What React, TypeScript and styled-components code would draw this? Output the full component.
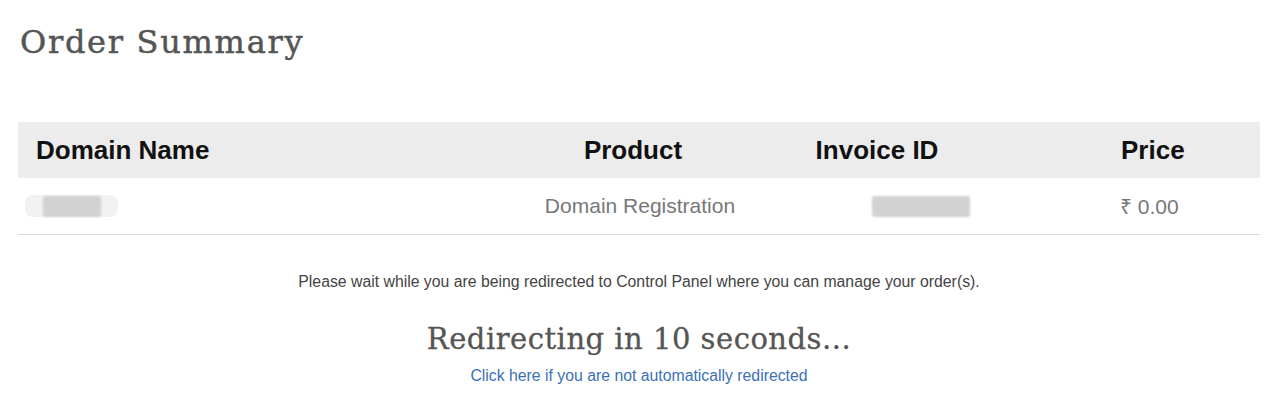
import React from "react";
import styled, { createGlobalStyle } from "styled-components";

const GlobalStyle = createGlobalStyle`
    body {
        margin: 0;
        background: #fff;
        font-family: "Liberation Sans", Arial, sans-serif;
    }
`;

const Page = styled.div`
    padding: 22px 20px 0 18px;
`;

const Title = styled.h1`
    margin: 0 0 0 2px;
    font-family: "DejaVu Serif", "Liberation Serif", serif;
    font-weight: 400;
    font-size: 32px;
    letter-spacing: 1.7px;
    line-height: 40px;
    color: #555;
    -webkit-text-stroke: 0.5px #555;
`;

const Table = styled.div`
    margin-top: 60px;
    display: grid;
    grid-template-columns: 512px 206px 282px 1fr;
`;

const HeadCell = styled.div<{ align?: string; pad?: string }>`
    background: #ececec;
    height: 56px;
    display: flex;
    align-items: center;
    justify-content: ${({ align }) => align || "center"};
    padding: ${({ pad }) => pad || "0"};
    font-size: 26px;
    font-weight: 700;
    color: #111;
`;

const Cell = styled.div<{ align?: string; pad?: string }>`
    height: 56px;
    display: flex;
    align-items: center;
    justify-content: ${({ align }) => align || "center"};
    padding: ${({ pad }) => pad || "0"};
    border-bottom: 1px solid #d9d9d9;
    font-size: 21px;
    color: #777;
`;

const Blur = styled.span<{ w: number }>`
    display: inline-block;
    width: ${({ w }) => w}px;
    height: 21px;
    background: #d2d2d2;
    border-radius: 2px;
    filter: blur(1px);
`;

const Fade = styled.span`
    display: inline-flex;
    justify-content: center;
    align-items: center;
    width: 93px;
    height: 22px;
    border-radius: 8px;
    background: #f1f1f1;
`;

const Notice = styled.div`
    text-align: center;
    margin-top: 38px;
    font-size: 15.8px;
    color: #444;
`;

const Redirect = styled.h2`
    margin: 28px 0 0;
    text-align: center;
    font-family: "DejaVu Serif", "Liberation Serif", serif;
    font-weight: 400;
    font-size: 29px;
    letter-spacing: 0.5px;
    line-height: 40px;
    color: #555;
    -webkit-text-stroke: 0.3px #555;
`;

const Link = styled.a`
    display: block;
    text-align: center;
    margin-top: 8px;
    font-size: 15.8px;
    color: #3b70b8;
    text-decoration: none;
`;

export default function App() {
    return (
        <>
            <GlobalStyle />
            <Page>
                <Title>Order Summary</Title>
                <Table>
                    <HeadCell align="flex-start" pad="0 0 0 18px">Domain Name</HeadCell>
                    <HeadCell>Product</HeadCell>
                    <HeadCell>Invoice ID</HeadCell>
                    <HeadCell align="flex-start" pad="0 0 0 103px">Price</HeadCell>

                    <Cell align="flex-start" pad="0 0 0 7px">
                        <Fade>
                            <Blur w={58} />
                        </Fade>
                    </Cell>
                    <Cell pad="0 0 0 14px">Domain Registration</Cell>
                    <Cell pad="0 0 0 88px">
                        <Blur w={98} />
                    </Cell>
                    <Cell align="flex-start" pad="0 0 0 102px">₹ 0.00</Cell>
                </Table>
                <Notice>Please wait while you are being redirected to Control Panel where you can manage your order(s).</Notice>
                <Redirect>Redirecting in 10 seconds...</Redirect>
                <Link href="#">Click here if you are not automatically redirected</Link>
            </Page>
        </>
    );
}
